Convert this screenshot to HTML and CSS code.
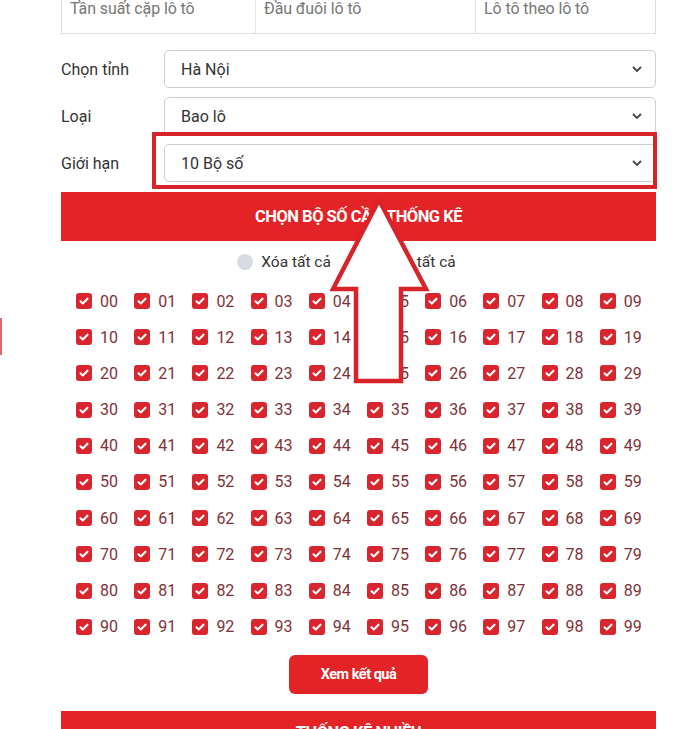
FILE: index.html
```html
<!DOCTYPE html>
<html lang="vi">
<head>
<meta charset="utf-8">
<title>Thống kê lô tô</title>
<link rel="stylesheet" href="styles.css">
</head>
<body>
<div class="side-mark"></div>
<div class="wrap">
  <div class="tabs">
    <div class="tab tab-1">Tần suất cặp lô tô</div>
    <div class="tab tab-2">Đầu đuôi lô tô</div>
    <div class="tab tab-3">Lô tô theo lô tô</div>
  </div>

  <form class="form">
    <div class="row">
      <label class="lbl">Chọn tỉnh</label>
      <div class="sel"><span>Hà Nội</span><svg class="chev" viewBox="0 0 10 6" width="10" height="6"><path d="M1 1l4 4 4-4" fill="none" stroke="#444" stroke-width="1.8"/></svg></div>
    </div>
    <div class="row">
      <label class="lbl">Loại</label>
      <div class="sel"><span>Bao lô</span><svg class="chev" viewBox="0 0 10 6" width="10" height="6"><path d="M1 1l4 4 4-4" fill="none" stroke="#444" stroke-width="1.8"/></svg></div>
    </div>
    <div class="row">
      <label class="lbl">Giới hạn</label>
      <div class="sel"><span>10 Bộ số</span><svg class="chev" viewBox="0 0 10 6" width="10" height="6"><path d="M1 1l4 4 4-4" fill="none" stroke="#444" stroke-width="1.8"/></svg></div>
    </div>
  </form>

  <div class="bar">CHỌN BỘ SỐ CẦN THỐNG KÊ</div>

  <div class="radios">
    <div class="radio"><span class="dot"></span>Xóa tất cả</div>
    <div class="radio"><span class="dot"></span>Chọn tất cả</div>
  </div>

  <div class="grid" id="grid"></div>

  <div class="actions"><button class="btn" type="button">Xem kết quả</button></div>

  <div class="bar bar-bottom">THỐNG KÊ NHIỀU</div>
</div>

<div class="highlight"></div>
<svg class="arrow" width="110" height="196" viewBox="0 0 110 196">
  <polygon points="49,3 96,92 71,92 71,184 26,184 26,92 3,92" fill="#fff" stroke="#d8232a" stroke-width="4.5" stroke-linejoin="miter"/>
</svg>

<script>
  var g = document.getElementById('grid');
  var html = '';
  for (var i = 0; i < 100; i++) {
    var n = (i < 10 ? '0' : '') + i;
    html += '<div class="cell"><span class="cb"><svg viewBox="0 0 16 16" width="16" height="16"><path d="M4.5 8.3l2.3 2.2 4.7-4.8" fill="none" stroke="#fff" stroke-width="2.1" stroke-linecap="round" stroke-linejoin="round"/></svg></span><span class="num">' + n + '</span></div>';
  }
  g.innerHTML = html;
</script>
</body>
</html>
```

FILE: styles.css
```css
* { box-sizing: border-box; }
html, body { margin: 0; padding: 0; background: #fff; }
body {
  font-family: Roboto, "Liberation Sans", Arial, sans-serif;
  color: #333;
  position: relative;
  width: 693px;
  height: 729px;
  overflow: hidden;
}
.wrap {
  margin-left: 61px;
  width: 595px;
}
.tabs {
  display: grid;
  grid-template-columns: 193px 220px 1fr;
  height: 34px;
  border: 1px solid #dedede;
  border-top: 0;
}
.tab {
  font-size: 16px;
  line-height: 17px;
  color: #777;
  padding-left: 8px;
  letter-spacing: -0.1px;
}
.tab-2, .tab-3 { border-left: 1px solid #e4e4e4; }
.form {
  margin-top: 16px;
  display: flex;
  flex-direction: column;
  gap: 9px;
}
.row {
  display: flex;
  align-items: center;
}
.lbl {
  width: 103px;
  font-size: 16px;
  color: #333;
}
.sel {
  flex: 1;
  height: 38px;
  border: 1px solid #cfcfcf;
  border-radius: 5px;
  display: flex;
  align-items: center;
  justify-content: space-between;
  padding: 0 13px 0 16px;
  font-size: 16px;
  color: #333;
}
.chev { display: block; }
.bar {
  margin-top: 10px;
  height: 49px;
  background: #e42326;
  color: #fff;
  font-weight: 700;
  font-size: 16.5px;
  letter-spacing: -0.5px;
  display: flex;
  align-items: center;
  justify-content: center;
}
.radios {
  display: flex;
  justify-content: center;
  gap: 22px;
  padding-right: 24px;
  margin-top: 12px;
  height: 18px;
  align-items: center;
}
.radio {
  display: flex;
  align-items: center;
  gap: 8px;
  font-size: 15.5px;
  color: #333;
}
.dot {
  width: 16px;
  height: 16px;
  border-radius: 50%;
  background: #d9dbe3;
}
.grid {
  margin-top: 21px;
  padding-left: 15px;
  display: grid;
  grid-template-columns: repeat(10, 58.2px);
  grid-auto-rows: 36.2px;
}
.cell {
  display: flex;
  align-items: center;
  gap: 8px;
  height: 18px;
}
.cb {
  width: 16px;
  height: 16px;
  border-radius: 3px;
  background: #d9262e;
  display: block;
}
.cb svg { display: block; }
.num {
  font-size: 16px;
  color: #7e3238;
}
.actions {
  display: flex;
  justify-content: center;
  margin-top: 1px;
}
.btn {
  width: 139px;
  height: 39px;
  border: 0;
  border-radius: 6px;
  background: #e42326;
  color: #fff;
  font-family: Roboto, "Liberation Sans", Arial, sans-serif;
  font-weight: 700;
  font-size: 14.5px;
  letter-spacing: -0.5px;
}
.bar-bottom {
  margin-top: 17px;
  align-items: flex-start;
  padding-top: 12px;
}
.highlight {
  position: absolute;
  left: 152px;
  top: 132px;
  width: 505px;
  height: 57px;
  border: 4px solid #d8232a;
}
.arrow {
  position: absolute;
  left: 330px;
  top: 197px;
}
.side-mark {
  position: absolute;
  left: 0;
  top: 318px;
  width: 2px;
  height: 37px;
  background: #d86a6a;
}
```
